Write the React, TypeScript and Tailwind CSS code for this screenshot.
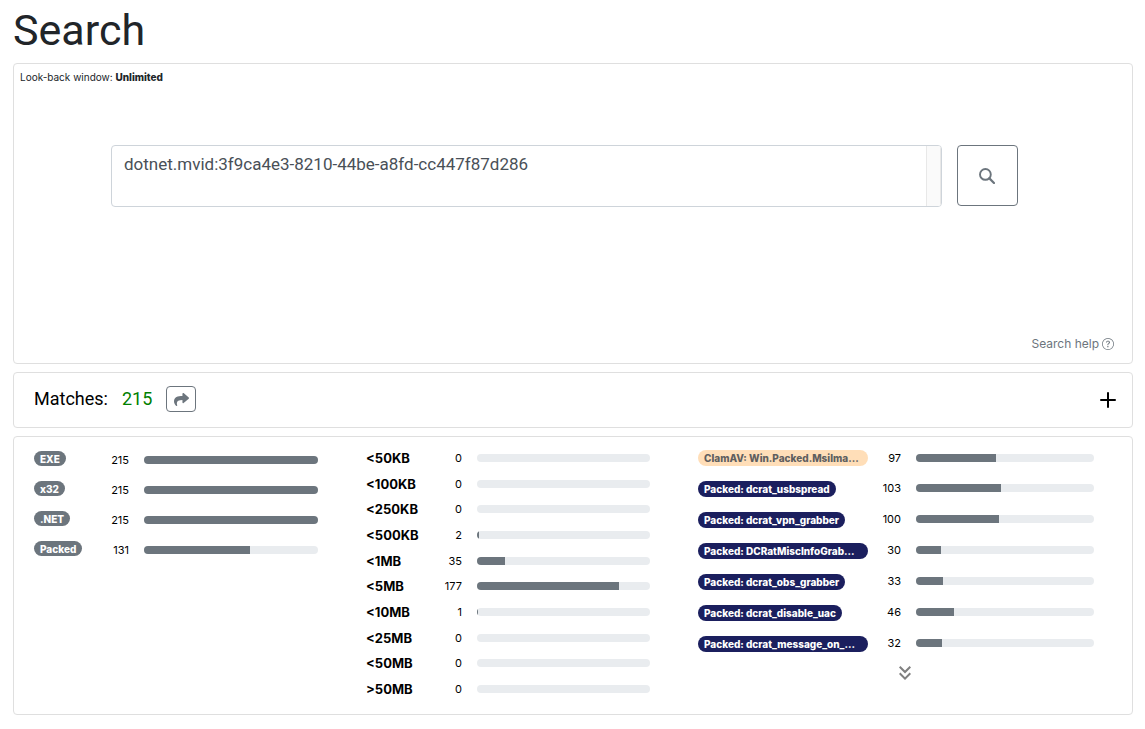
import { useState } from "react"
import { Plus } from "lucide-react"
import { BsQuestionCircle } from "react-icons/bs"
import { FaShare } from "react-icons/fa"
import { MdKeyboardDoubleArrowDown } from "react-icons/md"

const TOTAL = 215

interface Stat {
  label: string
  count: number
}

const fileTypes: Stat[] = [
  { label: "EXE", count: 215 },
  { label: "x32", count: 215 },
  { label: ".NET", count: 215 },
  { label: "Packed", count: 131 },
]

const fileSizes: Stat[] = [
  { label: "<50KB", count: 0 },
  { label: "<100KB", count: 0 },
  { label: "<250KB", count: 0 },
  { label: "<500KB", count: 2 },
  { label: "<1MB", count: 35 },
  { label: "<5MB", count: 177 },
  { label: "<10MB", count: 1 },
  { label: "<25MB", count: 0 },
  { label: "<50MB", count: 0 },
  { label: ">50MB", count: 0 },
]

const signatures: Stat[] = [
  { label: "ClamAV: Win.Packed.Msilma...", count: 97 },
  { label: "Packed: dcrat_usbspread", count: 103 },
  { label: "Packed: dcrat_vpn_grabber", count: 100 },
  { label: "Packed: DCRatMiscInfoGrab...", count: 30 },
  { label: "Packed: dcrat_obs_grabber", count: 33 },
  { label: "Packed: dcrat_disable_uac", count: 46 },
  { label: "Packed: dcrat_message_on_...", count: 32 },
]

const SearchIcon = () => (
  <svg className="size-4" viewBox="0 0 16 16" fill="none" stroke="currentColor" strokeWidth="1.9">
    <circle cx="6.4" cy="6.4" r="5.4" />
    <path d="M10.4 10.4 15 15" strokeWidth="2.2" strokeLinecap="round" />
  </svg>
)

const Bar = ({ count }: { count: number }) => (
  <div className="h-2 flex-1 overflow-hidden rounded-full bg-[#e9ecef]">
    <div className="h-full bg-[#6c757d]" style={{ width: `${(count / TOTAL) * 100}%` }} />
  </div>
)

const Count = ({ value }: { value: number }) => (
  <span className="mr-[15px] w-8 shrink-0 text-right text-[11px] leading-4 text-black">{value}</span>
)

export default function App() {
  const [query, setQuery] = useState("dotnet.mvid:3f9ca4e3-8210-44be-a8fd-cc447f87d286")

  return (
    <main className="min-h-screen bg-white pb-[14px] pl-[13px] pr-3 pt-[3px] font-[Inter,sans-serif] text-[#212529]">
      <h1 className="mb-[5px] font-[Roboto,sans-serif] text-[43px] font-normal leading-[55px]">Search</h1>

      {/* Query */}
      <section className="mb-2 flex h-[301px] flex-col rounded border border-[#dfdfdf]">
        <p className="px-[6px] pt-1 text-[10px] leading-[18px]">
          Look-back window: <strong className="font-extrabold">Unlimited</strong>
        </p>
        <form
          className="mt-[59px] flex items-start gap-[15px] pl-[97px] pr-[114px]"
          onSubmit={(e) => e.preventDefault()}
        >
          <div className="flex h-[62px] min-w-0 flex-1 overflow-hidden rounded border border-[#ced4da]">
            <textarea
              aria-label="Search query"
              className="min-w-0 flex-1 resize-none px-3 py-[6px] font-[Roboto,sans-serif] text-[17px] leading-6 text-[#495057] outline-none"
              value={query}
              spellCheck={false}
              onChange={(e) => setQuery(e.target.value)}
            />
            {/* Scroll track */}
            <div className="w-[15px] border-x border-[#e8e8e8] bg-[#fafafa]" />
          </div>
          <button
            type="submit"
            aria-label="Search"
            className="flex size-[61px] shrink-0 items-center justify-center rounded border border-[#6c757d] pr-px text-[#6c757d]"
          >
            <SearchIcon />
          </button>
        </form>
        <a
          href="#help"
          className="mb-[7px] mr-[18px] mt-auto flex items-center gap-[3px] self-end text-xs leading-6 text-[#6c757d]"
        >
          Search help <BsQuestionCircle size={12} />
        </a>
      </section>

      {/* Matches */}
      <section className="mb-2 flex h-14 items-center justify-between rounded border border-[#dfdfdf] pl-5 pr-3 text-black">
        <div className="flex items-center pb-[2px] font-[Roboto,sans-serif] text-lg">
          <h2>Matches:</h2>
          <span className="ml-[14px] text-[#008000]">{TOTAL}</span>
          <button
            aria-label="Share"
            className="ml-[14px] flex h-[26px] w-[30px] items-center justify-center rounded border border-[#6c757d] text-[#6c757d]"
          >
            <FaShare size={15} />
          </button>
        </div>
        <button aria-label="Expand">
          <Plus size={24} />
        </button>
      </section>

      {/* Breakdown */}
      <section className="grid grid-cols-[284fr_284fr_396fr] items-start gap-12 rounded border border-[#dfdfdf] pb-4 pl-5 pr-[38px] pt-3">
        <ul className="flex flex-col gap-3 pt-[2px]">
          {fileTypes.map((s) => (
            <li key={s.label} className="flex h-[18px] items-center">
              <span className="w-[63px] shrink-0 self-start">
                <span className="block h-[15px] w-fit rounded-full bg-[#6c757d] px-[6px] text-[10px] font-extrabold leading-4 text-white">
                  {s.label}
                </span>
              </span>
              <Count value={s.count} />
              <Bar count={s.count} />
            </li>
          ))}
        </ul>

        <ul className="flex h-[249px] flex-col justify-between">
          {fileSizes.map((s) => (
            <li key={s.label} className="flex h-[18px] items-center">
              <span className="w-16 shrink-0 text-[13px] font-bold leading-4 text-black">{s.label}</span>
              <Count value={s.count} />
              <Bar count={s.count} />
            </li>
          ))}
        </ul>

        <div className="pt-px">
          <ul className="flex flex-col gap-[13px]">
            {signatures.map((s) => (
              <li key={s.label} className="flex h-[18px] items-center first:h-4">
                <span className="w-[171px] shrink-0 self-end">
                  <span
                    className={`block h-4 max-w-[170px] overflow-hidden whitespace-nowrap rounded-full px-[6px] text-[10px] font-extrabold leading-4 ${
                      s.label.endsWith("...") ? "w-full" : "w-fit"
                    } ${s.label.startsWith("ClamAV") ? "bg-[#ffdeb8] text-[#5f5f5f]" : "bg-[#1b1f5e] text-white"}`}
                  >
                    {s.label}
                  </span>
                </span>
                <Count value={s.count} />
                <Bar count={s.count} />
              </li>
            ))}
          </ul>
          <div className="flex justify-center pl-[17px] pt-[9px]">
            <button aria-label="Show more" className="text-[#808080]">
              <MdKeyboardDoubleArrowDown size={24} />
            </button>
          </div>
        </div>
      </section>
    </main>
  )
}
